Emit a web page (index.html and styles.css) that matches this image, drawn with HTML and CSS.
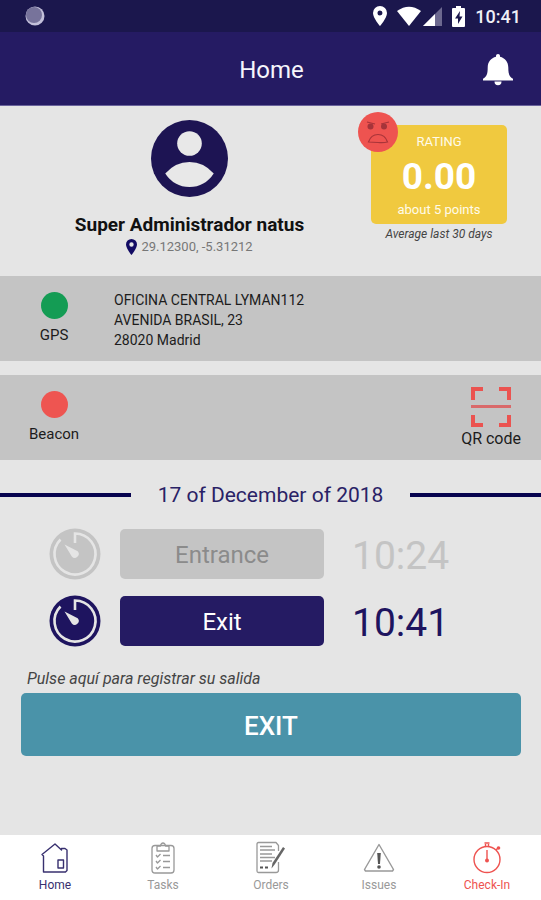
FILE: index.html
```html
<!DOCTYPE html>
<html lang="en">
<head>
<meta charset="utf-8">
<meta name="viewport" content="width=device-width, initial-scale=1">
<title>Home</title>
<link rel="stylesheet" href="styles.css">
</head>
<body>
<svg class="defs" aria-hidden="true">
  <symbol id="dial" viewBox="0 0 52 52">
    <circle cx="26" cy="26" r="25.5" fill="currentColor"/>
    <path d="M26 15V5.500A20.500 20.500 0 1 1 11.500 11.500" fill="none" stroke="#e5e5e5" stroke-width="2.600"/>
    <path d="M15.500 16.500L28.700 23.200A3.800 3.800 0 1 1 22.800 28.400Z" fill="#e5e5e5"/>
  </symbol>
</svg>

<div class="status">
  <svg class="status-dot" viewBox="0 0 20 20" aria-hidden="true">
    <circle cx="10" cy="10" r="9.500" fill="#c3c0da"/>
    <circle cx="9" cy="9" r="8" fill="#77739b"/>
  </svg>
  <div class="status-icons">
    <svg width="14" height="20" viewBox="0 0 14 20" aria-hidden="true"><path fill="#fff" fill-rule="evenodd" d="M7 0a7 7 0 0 1 7 7c0 5-7 13-7 13S0 12 0 7a7 7 0 0 1 7-7zm0 4.500a2.500 2.500 0 1 0 0 5 2.500 2.500 0 0 0 0-5z"/></svg>
    <svg class="wifi" width="24" height="20" viewBox="0 0 24 20" aria-hidden="true"><path fill="#fff" d="M0 5Q12-3.500 24 5L12 20z"/></svg>
    <svg class="signal" width="19" height="19" viewBox="0 0 19 19" aria-hidden="true"><path fill="#6c688f" d="M0 19L19 0v19z"/><path fill="#fff" d="M0 19L12 7v12z"/></svg>
    <svg class="battery" width="13" height="21" viewBox="0 0 13 21" aria-hidden="true"><path fill="#fff" d="M4 0h5v2h3q1 0 1 1v17q0 1-1 1H1q-1 0-1-1V3q0-1 1-1h3z"/><path fill="#1b174d" d="M8 5L3 12.500h3V18l4.500-7.500h-3z"/></svg>
    <span class="clock">10:41</span>
  </div>
</div>

<header class="header">
  <h1>Home</h1>
  <button class="bell" type="button" aria-label="Notifications">
    <svg width="30" height="32" viewBox="0 0 30 32" aria-hidden="true"><path fill="#fff" d="M15 0c1.200 0 2 .8 2 2v.8c5 1.200 8.300 5 8.300 10.700 0 6.500 1 9.200 4.700 11.300v1.700H0v-1.700c3.700-2.100 4.700-4.800 4.700-11.300C4.700 7.800 8 4 13 2.800V2c0-1.200.8-2 2-2zM11.500 27.500h7a3.500 3.800 0 0 1-7 0z"/></svg>
  </button>
</header>

<main>
  <section class="profile">
    <div class="person">
      <svg class="avatar" viewBox="2 2 20 20" aria-hidden="true"><circle cx="12" cy="12" r="10" fill="#1d1453"/><circle cx="12" cy="8.100" r="3.200" fill="#e8e8e8"/><path fill="#e8e8e8" d="M5.700 15.900Q8.300 12.900 12 12.900t6.300 3Q16 19.400 12 19.400t-6.300-3.500z"/></svg>
      <h2>Super Administrador natus</h2>
      <p class="coords"><svg width="11" height="16" viewBox="0 0 11 16" aria-hidden="true"><path fill="#120b63" fill-rule="evenodd" d="M5.500 0A5.500 5.500 0 0 1 11 5.500C11 9.500 5.500 16 5.500 16S0 9.500 0 5.500A5.500 5.500 0 0 1 5.500 0zm0 3.300a2.200 2.200 0 1 0 0 4.400 2.200 2.200 0 0 0 0-4.400z"/></svg>29.12300, -5.31212</p>
    </div>
    <div class="rating">
      <div class="rating-card">
        <svg class="face" viewBox="0 0 40 40" aria-hidden="true"><circle cx="20" cy="20" r="20" fill="#ee5350"/><g fill="none" stroke="#a93439" stroke-width="1.200"><path d="M10.500 30Q13 22.500 20 22.500T29.500 30Q26 31 20 30.500T10.500 30zM9 10l8 2M31 10l-8 2"/></g><circle cx="12.500" cy="14.500" r="3" fill="#a5343a"/><circle cx="26" cy="14.500" r="3" fill="#a5343a"/></svg>
        <span class="rating-title">RATING</span>
        <strong>0.00</strong>
        <span class="rating-sub">about 5 points</span>
      </div>
      <p class="rating-note">Average last 30 days</p>
    </div>
  </section>

  <section class="band">
    <div class="signal-state"><span class="lamp on"></span>GPS</div>
    <address>OFICINA CENTRAL LYMAN112<br>AVENIDA BRASIL, 23<br>28020 Madrid</address>
  </section>

  <section class="band beacon">
    <div class="signal-state"><span class="lamp"></span>Beacon</div>
    <button class="qr" type="button">
      <svg width="40" height="40" viewBox="0 0 40 40" aria-hidden="true"><path fill="none" stroke="#eb5350" stroke-width="4" d="M2 13V2h10M28 2h10v11M2 28v10h10M28 38h10V28"/><path stroke="#d9696a" stroke-width="3" d="M0 19.500h40"/></svg>
      QR code
    </button>
  </section>

  <h3 class="date">17 of December of 2018</h3>

  <section class="marks">
    <div class="mark off">
      <svg class="dial" aria-hidden="true"><use href="#dial"/></svg>
      <button type="button" disabled>Entrance</button>
      <time>10:24</time>
    </div>
    <div class="mark">
      <svg class="dial" aria-hidden="true"><use href="#dial"/></svg>
      <button type="button">Exit</button>
      <time>10:41</time>
    </div>
  </section>

  <section class="register">
    <p>Pulse aquí para registrar su salida</p>
    <button type="button">EXIT</button>
  </section>
</main>

<nav class="tabs">
  <a class="active" href="#home">
    <svg width="34" height="34" viewBox="0 0 34 34" aria-hidden="true"><g fill="none" stroke="currentColor" stroke-width="1.400" stroke-linejoin="round"><path d="M5.500 31V15L4 13.500 17 3l6.500 6V7.500h3.500L29 9v20.500L27.500 31z"/><path d="M20 19h5.500v8H20z"/></g></svg>
    Home
  </a>
  <a href="#tasks">
    <svg width="34" height="34" viewBox="0 0 34 34" aria-hidden="true"><g fill="none" stroke="currentColor" stroke-width="1.300" stroke-linejoin="round"><rect x="6" y="4.500" width="22" height="27.500" rx="3"/><path d="M11 5h3.500q.5-3 2.500-3t2.500 3H23v5H11zM10 14l1.500 2 3-3M17 14.500h7M10 20l1.500 2 3-3M17 20.500h7M10 26l1.500 2 3-3M17 26.500h7"/></g></svg>
    Tasks
  </a>
  <a href="#orders">
    <svg width="34" height="34" viewBox="0 0 34 34" aria-hidden="true"><g fill="none" stroke="currentColor" stroke-width="1.300" stroke-linejoin="round"><path d="M24.500 10V4.500L22 1.500H4.500Q3 1.500 3 3v27q0 1.500 1.500 1.500H22q2.500 0 2.500-2.500v-8M6 5.500h12M6 9h15M6 13h12M6 16.500h15M6 20h12"/></g><path fill="#666" d="M29 6l2 1.500-10 15.500-3.500 4.500 1-5.500z"/><path stroke="#555" stroke-width="2" d="M6 26.500h3M11 26.500h3"/></svg>
    Orders
  </a>
  <a href="#issues">
    <svg width="34" height="34" viewBox="0 0 34 34" aria-hidden="true"><path fill="none" stroke="currentColor" stroke-width="1.400" stroke-linejoin="round" d="M17 3.500L31.500 28.500 30.500 30h-27l-1-1.500z"/><path fill="#555" d="M15.200 12h3.600l-.8 11h-2z"/><circle cx="17" cy="26" r="1.800" fill="#555"/></svg>
    Issues
  </a>
  <a class="alert" href="#checkin">
    <svg width="34" height="34" viewBox="0 0 34 34" aria-hidden="true"><g fill="none" stroke="currentColor" stroke-width="1.400"><circle cx="17" cy="18.500" r="13"/><path d="M17 9v11M15.500 5.500V3M18.500 5.500V3M14.500 2h5M26 9l2-2"/></g><circle cx="17" cy="19.500" r="2" fill="currentColor"/><circle cx="28.500" cy="7" r="1.800" fill="currentColor"/></svg>
    Check-In
  </a>
</nav>
</body>
</html>
```
FILE: styles.css
```css
* { box-sizing: border-box; }

body {
  margin: 0;
  min-height: 100vh;
  display: flex;
  flex-direction: column;
  background: #e5e5e5;
  font-family: Roboto, "Liberation Sans", sans-serif;
  color: #1c1c1c;
}

h1, h2, h3, p { margin: 0; font-weight: 400; }
button { font: inherit; border: 0; padding: 0; cursor: pointer; }
svg { display: block; flex: none; }
.defs { position: absolute; width: 0; height: 0; }

.status {
  height: 32px;
  padding: 0 20px 0 25px;
  display: flex;
  align-items: center;
  justify-content: space-between;
  background: #1b174d;
}
.status-dot { width: 20px; height: 20px; }
.status-icons { display: flex; align-items: center; }
.wifi { margin-left: 10px; }
.signal { margin-left: 2px; }
.battery { margin-left: 10px; }
.clock {
  margin-left: 10px;
  padding-top: 2px;
  font-size: 18px;
  font-weight: 500;
  line-height: 30px;
  color: #f0f0f6;
}

.header {
  height: 74px;
  padding: 2px 28px 0 30px;
  display: grid;
  grid-template-columns: 30px 1fr 30px;
  align-items: center;
  background: #251b63;
  border-bottom: 1px solid #6a639c;
}
.header h1 {
  grid-column: 2;
  text-align: center;
  font-size: 24px;
  line-height: 32px;
  color: #f6f6fc;
}
.bell { background: none; }

main { flex: 1; }

.profile {
  height: 170px;
  padding: 14px 34px 0 8px;
  display: grid;
  grid-template-columns: 1fr 136px;
}
.person {
  display: flex;
  flex-direction: column;
  align-items: center;
}
.avatar { width: 77px; height: 77px; }
.person h2 {
  margin-top: 16px;
  font-size: 19px;
  line-height: 24px;
  font-weight: 700;
  color: #111;
}
.coords {
  display: flex;
  align-items: center;
  gap: 4px;
  font-size: 13px;
  line-height: 20px;
  color: #777;
}

.rating { padding-top: 5px; }
.rating-card {
  position: relative;
  height: 99px;
  padding-top: 7px;
  display: flex;
  flex-direction: column;
  align-items: center;
  border-radius: 5px;
  background: #f0c93f;
  color: #fffbea;
}
.face {
  position: absolute;
  left: -13px;
  top: -13px;
  width: 40px;
  height: 40px;
}
.rating-title, .rating-sub { font-size: 13px; line-height: 20px; }
.rating-card strong {
  padding-top: 2px;
  font-size: 37px;
  line-height: 46px;
  font-weight: 700;
  color: #fff;
}
.rating-note {
  text-align: center;
  font-size: 12px;
  line-height: 20px;
  font-style: italic;
  color: #444;
}

.band {
  height: 85px;
  padding: 0 20px;
  display: flex;
  background: #c4c4c4;
}
.beacon { margin-top: 14px; justify-content: space-between; }
.signal-state {
  width: 68px;
  padding-top: 16px;
  display: flex;
  flex-direction: column;
  align-items: center;
  gap: 4px;
  font-size: 15px;
  line-height: 24px;
}
.lamp {
  width: 27px;
  height: 27px;
  border-radius: 50%;
  background: #ee5551;
}
.lamp.on { background: #149c54; }
address {
  margin-left: 26px;
  padding-top: 14px;
  font-size: 14px;
  line-height: 20px;
  font-style: normal;
}
.qr {
  padding-top: 12px;
  display: flex;
  flex-direction: column;
  align-items: center;
  background: none;
  font-size: 16px;
  line-height: 24px;
  color: #1c1c1c;
}

.date {
  margin-top: 19px;
  display: flex;
  align-items: center;
  gap: 27px;
  font-size: 21px;
  line-height: 32px;
  color: #2a2266;
}
.date::before, .date::after {
  content: "";
  flex: 1;
  height: 4px;
  background: #07034f;
}

.marks {
  margin-top: 17px;
  padding: 0 28px 0 49px;
  display: flex;
  flex-direction: column;
  gap: 15px;
}
.mark {
  display: grid;
  grid-template-columns: 52px 204fr 170fr;
  column-gap: 19px;
  align-items: center;
  color: #1e145f;
}
.dial { width: 52px; height: 52px; }
.mark button {
  height: 50px;
  padding-top: 2px;
  border-radius: 5px;
  background: #251b63;
  color: #fff;
  font-size: 24px;
}
.mark time { padding: 4px 0 0 9px; font-size: 39px; line-height: 48px; }
.mark.off { color: #c4c4c4; }
.mark.off button { background: #c4c4c4; color: #8b8b8b; }

.register { padding: 20px 20px 0 21px; }
.register p {
  padding-left: 6px;
  font-size: 16px;
  line-height: 24px;
  font-style: italic;
  color: #444;
}
.register button {
  width: 100%;
  height: 63px;
  margin-top: 2px;
  padding-top: 2px;
  border-radius: 5px;
  background: #4a93a9;
  color: #fff;
  font-size: 26px;
  font-weight: 500;
}

.tabs {
  height: 65px;
  padding-left: 1px;
  display: grid;
  grid-template-columns: repeat(5, 1fr);
  background: #fff;
}
.tabs a {
  padding-top: 6px;
  display: flex;
  flex-direction: column;
  align-items: center;
  font-size: 12px;
  line-height: 20px;
  text-decoration: none;
  color: #999;
}
.tabs .active { color: #38306f; }
.tabs .alert { color: #ee5350; }
```
